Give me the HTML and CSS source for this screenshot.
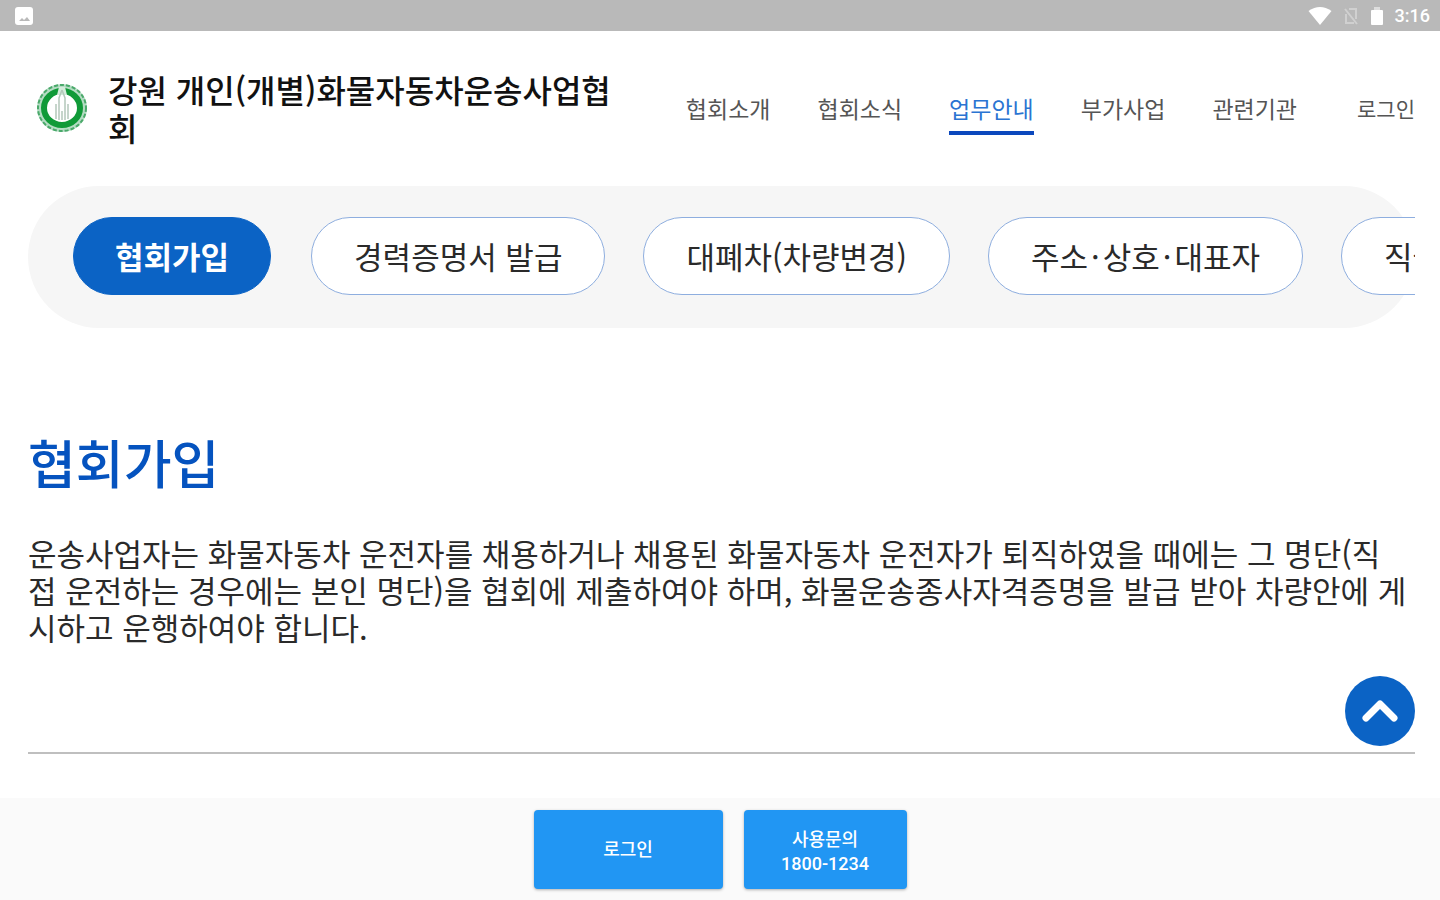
FILE: index.html
```html
<!DOCTYPE html>
<html lang="ko">
<head>
<meta charset="utf-8">
<meta name="viewport" content="width=device-width, initial-scale=1">
<title>강원 개인(개별)화물자동차운송사업협회</title>
<link rel="stylesheet" href="styles.css">
</head>
<body>
<div class="status">
  <svg class="status-photo" width="20" height="20" viewBox="0 0 20 20" aria-hidden="true"><rect x="1" y="1" width="18" height="18" rx="3" fill="#fff"/><path d="M5 15l3-3 2 2 3-3 3 4z" fill="#b9b9b9"/></svg>
  <div class="status-right">
    <svg width="24" height="20" viewBox="0 0 24 20" aria-hidden="true"><path d="M12 19L0.500 5Q12-3 23.500 5Z" fill="#fff"/></svg>
    <svg class="status-sim" width="16" height="20" viewBox="0 0 16 20" aria-hidden="true"><path d="M2 3l12 15M6 3h7v10M3 8v9h8" fill="none" stroke="#d0d0d0" stroke-width="2"/></svg>
    <svg width="14" height="20" viewBox="0 0 14 20" aria-hidden="true"><path d="M4 1h6v4H4z" fill="#ddd"/><rect x="1" y="4" width="12" height="15" rx="1" fill="#fff"/></svg>
    <span class="clock">3:16</span>
  </div>
</div>
<header class="header">
  <a class="brand" href="#">
    <svg class="logo" width="52" height="50" viewBox="0 0 52 50" aria-hidden="true">
      <ellipse cx="26" cy="25" rx="25" ry="24" fill="#b4dcc3"/>
      <ellipse cx="26" cy="25" rx="24" ry="23" fill="none" stroke="#4aa96a" stroke-width="2" stroke-dasharray="4 2"/>
      <ellipse cx="26" cy="25" rx="18" ry="17" fill="#fff" stroke="#109a38" stroke-width="6"/>
      <path d="M23 4h6l2 8H21z" fill="#d4ecdb"/>
      <path d="M26 7l-3 8v22M26 7l3 8v22M20 21v15M32 21v15M26 28v9" fill="none" stroke="#b4c8bb" stroke-width="1.500"/>
    </svg>
    <h1 class="brand-name">강원 개인(개별)화물자동차운송사업협회</h1>
  </a>
  <nav class="nav">
    <a href="#">협회소개</a>
    <a href="#">협회소식</a>
    <a href="#" class="current">업무안내</a>
    <a href="#">부가사업</a>
    <a href="#">관련기관</a>
  </nav>
  <a class="login-link" href="#">로그인</a>
</header>
<main class="main">
  <div class="tabs-clip">
    <nav class="tabs">
      <a class="tab active" href="#">협회가입</a>
      <a class="tab" href="#">경력증명서 발급</a>
      <a class="tab" href="#">대폐차(차량변경)</a>
      <a class="tab" href="#">주소<span class="dot">·</span>상호<span class="dot">·</span>대표자</a>
      <a class="tab" href="#">직권</a>
    </nav>
  </div>
  <section class="article">
    <h2 class="heading">협회가입</h2>
    <p class="body-text">운송사업자는 화물자동차 운전자를 채용하거나 채용된 화물자동차 운전자가 퇴직하였을 때에는 그 명단(직<br>접 운전하는 경우에는 본인 명단)을 협회에 제출하여야 하며, 화물운송종사자격증명을 발급 받아 차량안에 게시하고 운행하여야 합니다.</p>
  </section>
</main>
<footer class="footer">
  <button class="to-top" type="button" aria-label="맨 위로">
    <svg width="38" height="26" viewBox="0 0 38 26" aria-hidden="true"><path d="M5 20L19 6l14 14" fill="none" stroke="#fff" stroke-width="7" stroke-linecap="round" stroke-linejoin="round"/></svg>
  </button>
  <button class="action action-login" type="button">로그인</button>
  <button class="action action-call" type="button">사용문의<br>1800-1234</button>
</footer>
</body>
</html>
```
FILE: styles.css
```css
* { box-sizing: border-box; }
body {
  margin: 0;
  min-height: 100vh;
  display: flex;
  flex-direction: column;
  background: #fff;
  color: #2a2a2a;
  font-family: "Noto Sans CJK KR", sans-serif;
}
a { color: inherit; text-decoration: none; }
h1, h2, p { margin: 0; }
.status {
  height: 31px;
  padding: 0 10px 0 14px;
  display: flex;
  align-items: center;
  justify-content: space-between;
  background: #b9b9b9;
}
.status-right { display: flex; align-items: center; gap: 11px; }
.clock { color: #fff; font: 500 18px/30px Roboto, sans-serif; }
.header {
  height: 155px;
  padding: 0 25px 2px 36px;
  display: flex;
  align-items: center;
}
.brand { flex: 1; display: flex; align-items: center; gap: 20px; margin-right: 64px; }
.logo { flex: none; }
.brand-name { color: #111; font-size: 32px; line-height: 38px; font-weight: 500; }
.nav { display: flex; gap: 47px; font-size: 23px; line-height: 34px; color: #555; }
.nav a { padding: 10px 0 6px; border-bottom: 4px solid transparent; white-space: nowrap; }
.nav .current { color: #2a74d2; border-color: #0b48bd; }
.login-link { margin-left: 60px; color: #555; font-size: 21px; white-space: nowrap; }
.main { flex: 1; padding: 0 25px 44px 28px; display: flex; flex-direction: column; }
.tabs-clip { overflow: hidden; flex: none; }
.tabs {
  display: flex;
  gap: 38px;
  padding: 31px 45px 33px;
  border-radius: 71px;
  background: #f6f6f6;
}
.tab {
  flex: none;
  padding: 15px 42px;
  border: 1px solid #8eaedf;
  border-radius: 40px;
  background: #fff;
  font-size: 31px;
  line-height: 46px;
}
.tab.active { margin-right: 2px; padding: 15px 41px; background: #0b63c5; border-color: #0b63c5; color: #fff; font-weight: 700; }
.dot { padding: 0 3px; }
.article { flex: 1; padding-top: 96px; border-bottom: 2px solid #bfbfbf; }
.heading { color: #0553bf; font-size: 52px; line-height: 76px; font-weight: 500; }
.body-text { margin-top: 34px; font-size: 31px; line-height: 37px; }
.footer {
  position: relative;
  height: 102px;
  display: flex;
  align-items: flex-start;
  justify-content: center;
  gap: 21px;
  padding-top: 12px;
  background: #fafafa;
}
.action {
  height: 79px;
  padding: 0;
  border: 0;
  border-radius: 4px;
  background: #2196f3;
  box-shadow: 0 1px 3px rgba(0, 0, 0, 0.3);
  color: #fff;
  font: 500 18px/24px Roboto, "Noto Sans CJK KR", sans-serif;
}
.action-login { width: 189px; }
.action-call { width: 163px; padding-top: 4px; }
.to-top {
  position: absolute;
  right: 25px;
  bottom: 154px;
  width: 70px;
  height: 70px;
  padding: 0;
  border: 0;
  border-radius: 50%;
  background: #0b63c5;
  display: grid;
  place-items: center;
}
```
